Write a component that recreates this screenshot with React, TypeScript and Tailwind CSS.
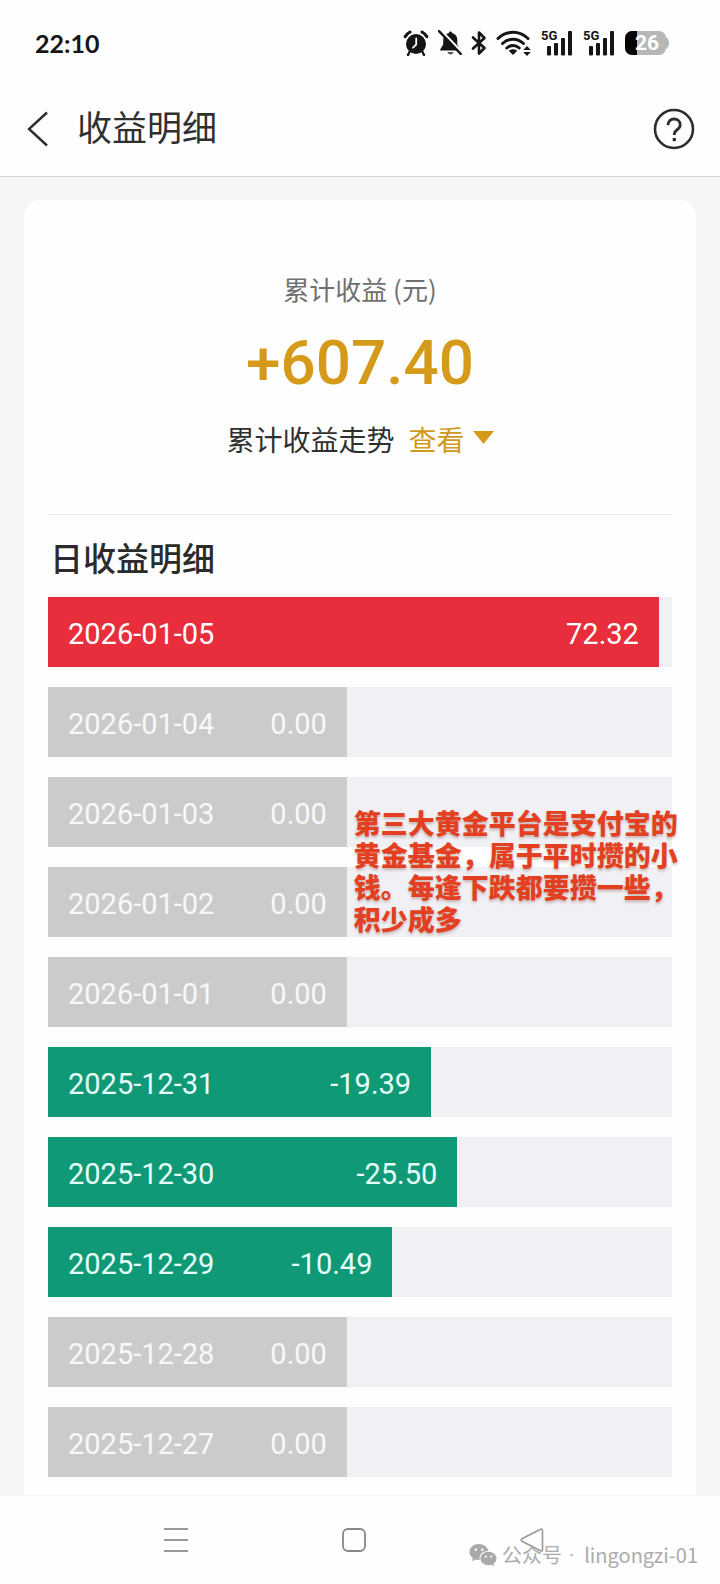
import React from "react";

type Tone = "gain" | "flat" | "loss";

interface DayRow {
  date: string;
  amount: string;
  tone: Tone;
  share: number;
}

const rows: DayRow[] = [
  { date: "2026-01-05", amount: "72.32", tone: "gain", share: 97.9 },
  { date: "2026-01-04", amount: "0.00", tone: "flat", share: 47.9 },
  { date: "2026-01-03", amount: "0.00", tone: "flat", share: 47.9 },
  { date: "2026-01-02", amount: "0.00", tone: "flat", share: 47.9 },
  { date: "2026-01-01", amount: "0.00", tone: "flat", share: 47.9 },
  { date: "2025-12-31", amount: "-19.39", tone: "loss", share: 61.4 },
  { date: "2025-12-30", amount: "-25.50", tone: "loss", share: 65.6 },
  { date: "2025-12-29", amount: "-10.49", tone: "loss", share: 55.2 },
  { date: "2025-12-28", amount: "0.00", tone: "flat", share: 47.9 },
  { date: "2025-12-27", amount: "0.00", tone: "flat", share: 47.9 },
];

const toneClass: Record<Tone, string> = {
  gain: "bg-[#e82d3c] text-white",
  flat: "bg-[#cbcbcb] text-[#f8f8f8]",
  loss: "bg-[#0f9976] text-[#e6fff9]",
};

const noteLines = [
  "第三大黄金平台是支付宝的",
  "黄金基金，属于平时攒的小",
  "钱。每逢下跌都要攒一些，",
  "积少成多",
];

function AlarmIcon() {
  return (
    <svg width="26" height="26" viewBox="0 0 26 26" fill="none">
      <circle cx="13" cy="14" r="10" fill="#151515" />
      <path d="M2.2 6.6A13 13 0 0 1 7 2M23.8 6.6A13 13 0 0 0 19 2" stroke="#151515" strokeWidth="3" strokeLinecap="round" />
      <path d="M6.5 22 5 25M19.5 22 21 25" stroke="#151515" strokeWidth="2.4" strokeLinecap="round" />
      <path d="M13.2 8.5v6L10 17.6" stroke="#fff" strokeWidth="1.8" strokeLinecap="round" strokeLinejoin="round" />
    </svg>
  );
}

function BellOffIcon() {
  return (
    <svg width="24" height="26" viewBox="0 0 24 26" fill="none">
      <path d="M12.5 1.5c1 0 1.6.7 1.6 1.6 3.3.8 5.2 3.3 5.2 6.8v4.6l2.7 5v1H2.2v-1l3-5V9.9c0-3.500 2-6 5.700-6.800 0-.9.6-1.600 1.600-1.600Z" fill="#151515" />
      <path d="M9.400 22h6.200c-.5 1.500-1.600 2.400-3.100 2.400S9.900 23.500 9.400 22Z" fill="#555" />
      <path d="M2.600 0 24.400 22.600" stroke="#fff" strokeWidth="2.200" />
      <path d="M1 1.200 22.800 24" stroke="#151515" strokeWidth="2.400" strokeLinecap="round" />
    </svg>
  );
}

function BluetoothIcon() {
  return (
    <svg width="16" height="26" viewBox="0 0 16 26" fill="none">
      <path d="M2 7.500 13.500 18 8 23.500V2.500L13.500 8 2 18.500" stroke="#151515" strokeWidth="2.600" strokeLinecap="round" strokeLinejoin="round" />
    </svg>
  );
}

function WifiIcon() {
  return (
    <svg width="36" height="26" viewBox="0 0 36 26" fill="none">
      <g stroke="#151515" strokeWidth="3" strokeLinecap="round">
        <path d="M2 8.500C10.500.3 23.500.3 32 8.500" />
        <path d="M6.500 13.500c6-5.700 15-5.700 21 0" />
        <path d="M10.800 18c3.600-3.300 8.800-3.300 12.400 0" />
      </g>
      <path d="M12.800 20.800c2.500-2 5.900-2 8.400 0L17 25Z" fill="#151515" />
      <path d="m31 16 3.800 4h-7.600ZM31 26l3.800-4h-7.600Z" fill="#151515" />
    </svg>
  );
}

function SignalIcon() {
  return (
    <span className="relative block h-[26px] w-8">
      <svg width="32" height="26" viewBox="0 0 32 26" fill="#151515">
        <rect x="6" y="16" width="4" height="9.500" rx="1" />
        <rect x="13" y="13" width="4" height="12.500" rx="1" />
        <rect x="20" y="8" width="4" height="17.500" rx="1" />
        <rect x="27" y="1" width="4" height="24.500" rx="1" />
      </svg>
      <span className="absolute top-0 left-0 font-['Roboto','Liberation_Sans',sans-serif] text-[13px] leading-3 font-bold text-[#151515]">
        5G
      </span>
    </span>
  );
}

function Battery() {
  return (
    <span className="relative flex h-6 w-[44px] items-center justify-center">
      <svg className="absolute inset-0" width="44" height="24" viewBox="0 0 44 24">
        <rect x="0" y="0" width="41" height="24" rx="7" fill="#b7b7b7" />
        <path d="M41 6c2 1.200 3 3.300 3 6s-1 4.800-3 6Z" fill="#b7b7b7" />
        <path d="M7 0h5v24H7a7 7 0 0 1-7-7V7a7 7 0 0 1 7-7Z" fill="#050505" />
      </svg>
      <span className="relative font-['Roboto','Liberation_Sans',sans-serif] text-[21px] leading-6 font-bold text-white">26</span>
    </span>
  );
}

function WeChatIcon() {
  return (
    <svg width="28" height="24" viewBox="0 0 28 24">
      <path d="M10 1C4.700 1 .5 4.500.5 9c0 2.500 1.300 4.600 3.400 6.100L3 18.200l3.500-1.800c1.100.3 2.200.5 3.500.5h.8C9.600 11.900 13.500 8 18.700 8h.7C18.500 4 14.700 1 10 1Z" fill="#a9a9a9" />
      <circle cx="6.800" cy="6.800" r="1.300" fill="#fff" />
      <circle cx="13.200" cy="6.800" r="1.300" fill="#fff" />
      <path d="M19.500 8.800c-4.500 0-8 3-8 6.700s3.500 6.700 8 6.700c1 0 2-.2 2.900-.4l2.800 1.500-.8-2.500c1.900-1.300 3-3.200 3-5.300 0-3.700-3.500-6.700-7.900-6.700Z" fill="#a9a9a9" />
      <circle cx="16.800" cy="13.500" r="1.100" fill="#fff" />
      <circle cx="22.200" cy="13.500" r="1.100" fill="#fff" />
    </svg>
  );
}

function StatusBar() {
  return (
    <div className="flex h-[85px] items-center justify-between pr-[51px] pl-[35px]">
      <span className="font-['Lato','Liberation_Sans',sans-serif] text-[25px] leading-8 font-bold text-[#151515]">22:10</span>
      <div className="flex items-center gap-[9px]">
        <AlarmIcon />
        <BellOffIcon />
        <BluetoothIcon />
        <WifiIcon />
        <div className="flex items-center gap-[10px]">
          <SignalIcon />
          <SignalIcon />
          <Battery />
        </div>
      </div>
    </div>
  );
}

function TitleBar() {
  return (
    <header className="flex h-[92px] items-center border-b border-[#d2d2d2] pr-[25px] pb-1 pl-[26px]">
      <button type="button" aria-label="返回" className="flex h-10 w-6 items-center">
        <svg width="24" height="36" viewBox="0 0 24 36" fill="none">
          <path d="M21 1.500 3 18l18 16.500" stroke="#2d2d2d" strokeWidth="2.400" />
        </svg>
      </button>
      <h1 className="ml-[27px] flex-1 pb-[6px] text-[35px] leading-[48px] font-normal text-[#303030]">收益明细</h1>
      <button type="button" aria-label="帮助">
        <svg width="42" height="42" viewBox="0 0 42 42" fill="none">
          <circle cx="21" cy="21" r="19" stroke="#2d2d2d" strokeWidth="2.600" />
          <path d="M15 17.200c0-3.700 2.500-6.200 6-6.200s6.200 2.300 6.200 5.700c0 2.600-1.500 4-3.400 5.300-1.700 1.200-2.500 2-2.500 4v1" stroke="#2d2d2d" strokeWidth="2.800" />
          <rect x="19.700" y="30" width="3.200" height="3.200" fill="#2d2d2d" />
        </svg>
      </button>
    </header>
  );
}

function Summary() {
  return (
    <section className="flex flex-col items-center border-b border-[#e6e6e6] pt-[69px] pb-[55px]">
      <p className="text-[26px] leading-10 text-[#707070]">累计收益 (元)</p>
      <p className="mt-[14px] font-['Roboto','Liberation_Sans',sans-serif] text-[62px] leading-[80px] font-medium text-[#d69a1b]">+607.40</p>
      <div className="mt-4 flex items-center text-[28px] leading-10 text-[#303030]">
        <span>累计收益走势</span>
        <button type="button" className="ml-[14px] flex items-center gap-2 text-[#cf9a1f]">
          查看
          <svg className="-mt-1" width="21" height="13" viewBox="0 0 21 13">
            <path d="M0 0h21L10.500 13Z" fill="#d69a1b" />
          </svg>
        </button>
      </div>
    </section>
  );
}

function DailyList() {
  return (
    <section>
      <h2 className="flex h-[82px] items-center pt-[2px] pl-[2px] text-[33px] leading-[48px] font-medium text-[#2b2b2b]">日收益明细</h2>
      <div className="relative">
        <ul className="flex flex-col gap-5 font-['Roboto','Liberation_Sans',sans-serif] text-[29px] leading-[36px]">
          {rows.map((row) => (
            <li key={row.date} className="bg-[#f0f0f5]">
              <div
                className={`flex h-[70px] items-center justify-between px-5 pt-[4px] ${toneClass[row.tone]}`}
                style={{ width: `${row.share}%` }}
              >
                <span>{row.date}</span>
                <span>{row.amount}</span>
              </div>
            </li>
          ))}
        </ul>
        <p className="absolute top-[210px] left-[49%] text-[27px] leading-8 font-black whitespace-nowrap text-[#e33f21] [text-shadow:0_2px_3px_rgba(120,60,50,0.35)]">
          {noteLines.map((line) => (
            <span key={line} className="block">
              {line}
            </span>
          ))}
        </p>
      </div>
    </section>
  );
}

function NavigationBar() {
  return (
    <nav className="relative flex h-[88px] items-center justify-center gap-[154px] bg-[#fefefe] pr-[13px]">
      <button type="button" aria-label="最近任务">
        <svg width="24" height="24" viewBox="0 0 24 24" fill="none" stroke="#999" strokeWidth="2">
          <path d="M0 1h24M0 12h24M0 23h24" />
        </svg>
      </button>
      <button type="button" aria-label="主页">
        <svg width="24" height="24" viewBox="0 0 24 24" fill="none">
          <rect x="1" y="1" width="22" height="22" rx="5" stroke="#888" strokeWidth="1.800" />
        </svg>
      </button>
      <button type="button" aria-label="后退">
        <svg width="24" height="24" viewBox="0 0 24 24" fill="none">
          <path d="M20.500 1.300 2 10.700c-1.200.7-1.200 1.900 0 2.600l18.500 9.400c1.100.5 2 0 2-1.200v-19c0-1.200-.9-1.700-2-1.200Z" stroke="#999" strokeWidth="1.600" />
        </svg>
      </button>
      <div className="absolute right-[22px] bottom-[13px] flex items-center text-[20px] leading-8 text-[#ababab]">
        <WeChatIcon />
        <span className="ml-[5px]">公众号</span>
        <span className="mr-[10px] ml-[7px] font-['Roboto','Liberation_Sans',sans-serif]">·</span>
        <span>lingongzi-01</span>
      </div>
    </nav>
  );
}

export default function App() {
  return (
    <div className="flex min-h-screen flex-col bg-[#fefefe] font-['Noto_Sans_CJK_SC',sans-serif]">
      <StatusBar />
      <TitleBar />
      <main className="flex-1 bg-[#f5f5f5] px-6 pt-[23px]">
        <div className="rounded-t-2xl bg-[#fefefe] px-6 pb-[18px]">
          <Summary />
          <DailyList />
        </div>
      </main>
      <NavigationBar />
    </div>
  );
}
